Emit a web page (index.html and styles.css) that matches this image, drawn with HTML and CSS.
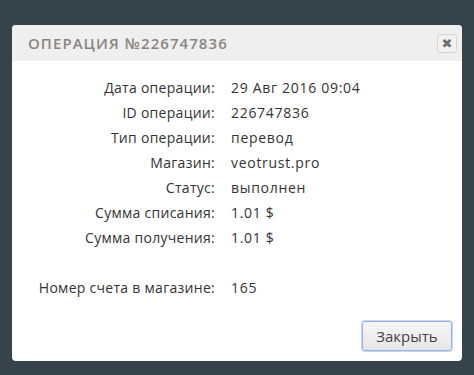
FILE: index.html
```html
<!DOCTYPE html>
<html>
<head>
    <title>Операция</title>
    <link rel="stylesheet" href="styles.css">
</head>
<body>
    <div class="modal">
        <div class="modal-header">
            <div class="modal-title">Операция №226747836</div>
            <button type="button" class="close">&#10006;</button>
        </div>
        <div class="modal-body">
            <div class="row"><div class="label">Дата операции:</div><div class="value">29 Авг 2016 09:04</div></div>
            <div class="row"><div class="label">ID операции:</div><div class="value">226747836</div></div>
            <div class="row"><div class="label">Тип операции:</div><div class="value">перевод</div></div>
            <div class="row"><div class="label">Магазин:</div><div class="value">veotrust.pro</div></div>
            <div class="row"><div class="label">Статус:</div><div class="value">выполнен</div></div>
            <div class="row"><div class="label">Сумма списания:</div><div class="value">1.01 $</div></div>
            <div class="row"><div class="label">Сумма получения:</div><div class="value">1.01 $</div></div>
            <div class="row"><div class="label">&nbsp;</div><div class="value"></div></div>
            <div class="row"><div class="label">Номер счета в магазине:</div><div class="value">165</div></div>
        </div>
        <div class="modal-footer">
            <button type="button" class="btn">Закрыть</button>
        </div>
    </div>
</body>
</html>
```

FILE: styles.css
```css
body {
    margin: 0;
    background-color: #36434b;
    font-family: "Open Sans", sans-serif;
    padding: 25px 12px 0 12px;
}

.modal {
    background-color: white;
    border-radius: 4px;
    overflow: hidden;
    height: 336px;
    display: flex;
    flex-direction: column;
}

.modal-header {
    background-color: #efefef;
    height: 36px;
    display: flex;
    align-items: center;
    justify-content: space-between;
    padding: 0 5px 0 16px;
}

.modal-title {
    text-transform: uppercase;
    color: #8a8580;
    font-size: 15px;
    font-weight: 600;
    letter-spacing: 1.05px;
}

.close {
    width: 20px;
    height: 19px;
    padding: 0;
    border: 1px solid #d6d6d6;
    border-radius: 3px;
    background-color: #f2f2f2;
    color: #6f6f6f;
    font-size: 13px;
    line-height: 17px;
    font-family: "DejaVu Sans", sans-serif;
}

.modal-body {
    padding: 14px 0 0 0;
    flex: 1;
}

.row {
    display: flex;
    height: 25px;
    align-items: center;
    font-size: 14px;
    color: #333;
}

.label {
    width: 203px;
    text-align: right;
    letter-spacing: 0.28px;
}

.value {
    padding-left: 16px;
    letter-spacing: 0.7px;
}

.modal-footer {
    display: flex;
    justify-content: flex-end;
    padding: 0 10px 10px 0;
}

.btn {
    width: 90px;
    height: 30px;
    border: 1px solid #8fb3f0;
    border-radius: 3px;
    background: linear-gradient(#f6f6f6, #e6e6e6);
    color: #444;
    font-family: "Open Sans", sans-serif;
    font-size: 15px;
    box-shadow: 0 0 0 1px #c6d8f8;
}
```
